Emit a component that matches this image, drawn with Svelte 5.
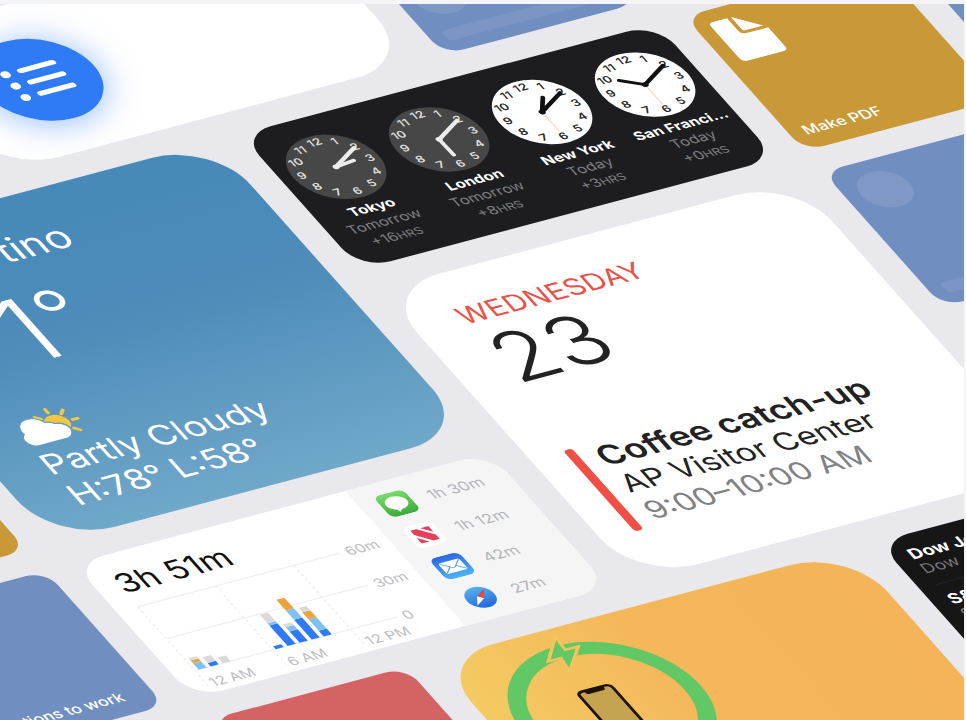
<script>
  const numerals = Array.from({ length: 12 }, (_, i) => {
    const angle = ((i + 1) * Math.PI) / 6;
    return { n: i + 1, x: 43 + 34 * Math.sin(angle), y: 43 - 34 * Math.cos(angle) };
  });

  const cities = [
    { name: 'Tokyo', day: 'Tomorrow', offset: '+16', night: true, hour: 84, hourLength: 19 },
    { name: 'London', day: 'Tomorrow', offset: '+8', night: true, hour: 178, hourLength: 22 },
    { name: 'New York', day: 'Today', offset: '+3', night: false, hour: 34, hourLength: 20 },
    { name: 'San Franci...', day: 'Today', offset: '+0', night: false, hour: 305, hourLength: 22 }
  ];

  const GRAY = '#dadada';
  const ORANGE = '#eba43c';
  const SKY = '#7cc3f4';
  const BLUE = '#2e79f6';

  // Each bar is stacked from the baseline upwards.
  const bars = [
    { x: 27, parts: [[SKY, 9], [ORANGE, 4], [GRAY, 3]] },
    { x: 39, parts: [[BLUE, 5], [GRAY, 8]] },
    { x: 51, parts: [[GRAY, 8]] },
    { x: 104, parts: [[BLUE, 4]] },
    { x: 116, parts: [[BLUE, 29], [SKY, 3], [GRAY, 12]] },
    { x: 128, parts: [[BLUE, 16], [SKY, 6], [GRAY, 4]] },
    { x: 140, parts: [[BLUE, 28], [SKY, 13], [ORANGE, 15]] },
    { x: 152, parts: [[BLUE, 8], [SKY, 16], [ORANGE, 10], [GRAY, 6]] }
  ].map((bar) => {
    let y = 159;
    return {
      x: bar.x,
      parts: bar.parts.map(([color, height]) => {
        y -= height;
        return { color, height, y };
      })
    };
  });

  const usage = [
    { app: 'messages', time: '1h 30m' },
    { app: 'news', time: '1h 12m' },
    { app: 'mail', time: '42m' },
    { app: 'safari', time: '27m' }
  ];

  const bolt = 'M113 15L95 35H106L104 50L123 30H112Z';
</script>

<main class="stage">
  <div class="plane">
    <section class="widget large reminders">
      <div class="badge">
        <svg viewBox="0 0 108 108" width="108" height="108" aria-label="Reminders">
          <g fill="#fff">
            <circle cx="30" cy="38" r="4.5" />
            <circle cx="30" cy="54" r="4.5" />
            <circle cx="30" cy="70" r="4.5" />
          </g>
          <path d="M45 38H77M45 54H77M45 70H77" stroke="#fff" stroke-width="6" stroke-linecap="round" />
        </svg>
      </div>
    </section>

    <div class="widget tile blue low">
      <span class="dot"></span>
      <span class="line"></span>
    </div>

    <section class="widget large weather">
      <h2>Cupertino</h2>
      <p class="temp">71<span>°</span></p>
      <svg class="sky" viewBox="0 0 66 46" width="66" height="46" aria-label="Partly cloudy">
        <circle cx="42" cy="23" r="11.5" fill="#f7c63f" />
        <path
          d="M42 3V8M56 9L52 13M28 9L32 13M57 23H62M52 33L56 37"
          stroke="#f7c63f"
          stroke-width="3.4"
          stroke-linecap="round"
        />
        <path
          d="M11 42A9 9 0 0 1 8 25A12.500 12.500 0 0 1 32 18A10 10 0 0 1 40 22.500A9.500 9.500 0 0 1 39 42Z"
          fill="#fff"
          stroke="#669cc4"
          stroke-width="2"
        />
        <path
          d="M11 42A9 9 0 0 1 8 25.500A12 12 0 0 1 32 18.500A9.500 9.500 0 0 1 39 23A9.200 9.200 0 0 1 38 42Z"
          fill="#fff"
        />
      </svg>
      <p>Partly Cloudy</p>
      <p>H:78° L:58°</p>
    </section>

    <section class="widget clocks">
      {#each cities as city}
        <div class="city" class:night={city.night}>
          <svg viewBox="0 0 86 86" width="86" height="86">
            <circle class="face" cx="43" cy="43" r="42.500" />
            {#each numerals as mark}
              <text x={mark.x} y={mark.y + 4}>{mark.n}</text>
            {/each}
            <path class="second" d="M43 43V70" />
            <g transform="rotate({city.hour} 43 43)">
              <path class="hand" d="M43 43V{43 - city.hourLength}" />
            </g>
            <g transform="rotate(60 43 43)">
              <path class="hand" d="M43 43V10" />
            </g>
            <circle class="hub" cx="43" cy="43" r="3" />
          </svg>
          <strong>{city.name}</strong>
          <span>{city.day}</span>
          <span>{city.offset}<small>HRS</small></span>
        </div>
      {/each}
    </section>

    <button class="widget tile gold">
      <svg viewBox="0 0 46 55" width="46" height="55" aria-hidden="true">
        <path
          fill="#fff"
          d="M5 0H19V17Q19 23 25 23H46V49Q46 55 40 55H6Q0 55 0 49V5Q0 0 5 0ZM23 0L43 19.500H25Q23 19.500 23 17.500Z"
        />
      </svg>
      <span>Make PDF</span>
    </button>

    <div class="widget tile blue far"></div>

    <div class="widget tile gold west"></div>

    <section class="widget large calendar">
      <h2>WEDNESDAY</h2>
      <p class="date">23</p>
      <div class="event">
        <strong>Coffee catch-up</strong>
        <span>AP Visitor Center</span>
        <time>9:00–10:00 AM</time>
      </div>
    </section>

    <div class="widget tile blue high">
      <span class="dot"></span>
      <span class="line"></span>
    </div>

    <button class="widget tile blue work"><span>Directions to work</span></button>

    <section class="widget screentime">
      <div class="graph">
        <h2>3h 51m</h2>
        <svg viewBox="2 56 272 134" width="272" height="134">
          <g stroke="#efeff1" stroke-width="1.500" fill="none">
            <path d="M23 69H225M23 114H225M23 159H225" />
            <path d="M23 69V182M101 69V182M179 69V182" stroke-dasharray="3 3" />
          </g>
          {#each bars as bar}
            {#each bar.parts as part}
              <rect x={bar.x} y={part.y} width="8" height={part.height} fill={part.color} />
            {/each}
          {/each}
          <text x="231" y="75">60m</text>
          <text x="231" y="120">30m</text>
          <text x="231" y="165">0</text>
          <text x="27" y="183">12 AM</text>
          <text x="105" y="183">6 AM</text>
          <text x="183" y="183">12 PM</text>
        </svg>
      </div>
      <ul>
        {#each usage as item}
          <li>
            <svg viewBox="0 0 30 30" width="30" height="30" aria-label={item.app}>
              {#if item.app === 'messages'}
                <rect width="30" height="30" rx="7" fill="url(#green)" />
                <path
                  d="M15 5.500C21 5.500 25.500 9.300 25.500 14S21 22.500 15 22.500L12 25.500L10.500 21.700C7 20.300 4.500 17.500 4.500 14C4.500 9.300 9 5.500 15 5.500Z"
                  fill="#fff"
                />
              {:else if item.app === 'news'}
                <rect width="30" height="30" rx="7" fill="#fff" />
                <path d="M6 6H12L24 18V24H18L6 12ZM16 6H24V14ZM6 16L14 24H6Z" fill="#e63f5c" />
              {:else if item.app === 'mail'}
                <rect width="30" height="30" rx="7" fill="url(#deep)" />
                <rect x="4.500" y="8" width="21" height="14.500" rx="2" fill="#fff" />
                <path
                  d="M5.500 9L13.500 16.300Q15 17.500 16.500 16.300L24.500 9M5.500 21.500L12 15.200M24.500 21.500L18 15.200"
                  fill="none"
                  stroke="#4a9ef0"
                  stroke-width="1"
                />
              {:else}
                <circle cx="15" cy="15" r="13.800" fill="url(#sea)" />
                <path d="M23.500 6.500L17.200 17.200L12.800 12.800Z" fill="#e8453c" />
                <path d="M6.500 23.500L17.200 17.200L12.800 12.800Z" fill="#fff" />
              {/if}
            </svg>
            <span>{item.time}</span>
          </li>
        {/each}
      </ul>
      <svg class="defs" width="0" height="0" aria-hidden="true">
        <linearGradient id="green" x2="0" y2="1">
          <stop offset="0" stop-color="#78dc6c" />
          <stop offset="1" stop-color="#3daa38" />
        </linearGradient>
        <linearGradient id="deep" x2="0" y2="1">
          <stop offset="0" stop-color="#2c68e0" />
          <stop offset="1" stop-color="#4fb4f5" />
        </linearGradient>
        <linearGradient id="sea" x2="0" y2="1">
          <stop offset="0" stop-color="#55b2ee" />
          <stop offset="1" stop-color="#2467dc" />
        </linearGradient>
      </svg>
    </section>

    <div class="widget tile red"></div>

    <section class="widget large battery">
      <svg viewBox="0 0 416 409" width="416" height="409" aria-label="Battery">
        <circle cx="109" cy="110" r="80.500" fill="none" stroke="#62c765" stroke-width="16" />
        <path d={bolt} fill="#f3c35c" stroke="#f3c35c" stroke-width="6" />
        <path d={bolt} fill="#62c765" />
        <rect x="92" y="81" width="33" height="66" rx="5" fill="#c6a350" stroke="#1c1206" stroke-width="3" />
        <path d="M99 81H118V83Q118 86 115 86H102Q99 86 99 83Z" fill="#1c1206" />
      </svg>
    </section>

    <section class="widget large stocks">
      <div class="stock"><strong>Dow Jones</strong><span>Dow Jones Industrial</span></div>
      <div class="stock"><strong>S&amp;P 500</strong><span>Standard &amp; Poor's</span></div>
    </section>
  </div>
</main>

<style>
  :global(body) {
    margin: 0;
    background: #f5f5f7;
  }

  .stage {
    box-sizing: border-box;
    height: 100vh;
    margin-right: 2px;
    border-top: 4px solid #f5f5f7;
    background: #e8e8ed;
    overflow: hidden;
    font-family: Inter, 'Liberation Sans', sans-serif;
  }

  h2,
  p,
  ul {
    margin: 0;
    padding: 0;
    font-weight: 400;
  }

  .plane {
    display: grid;
    width: max-content;
    grid-template-columns: repeat(7, 194px);
    grid-template-rows: repeat(6, 190px);
    gap: 29px 28px;
    transform-origin: 0 0;
    transform: matrix(1, -0.266, 0.632, 0.71, -564, 152);
  }

  .widget {
    box-sizing: border-box;
    min-width: 0;
    border: 0;
    border-radius: 30px;
    overflow: hidden;
    font-family: inherit;
  }

  .large {
    border-radius: 60px;
  }

  .reminders {
    grid-area: 1 / 3 / 2 / 5;
    padding: 42px 45px;
    background: #fff;
  }

  .badge {
    width: 108px;
    height: 108px;
    border-radius: 50%;
    background: #2f7bf6;
    box-shadow: 0 4px 32px rgba(47, 123, 246, 0.5);
  }

  .tile {
    display: flex;
    flex-direction: column;
    justify-content: space-between;
    align-items: flex-start;
    padding: 15px 14px 14px;
    border-radius: 20px;
    color: #fff;
    font-size: 16px;
    font-weight: 500;
    line-height: 20px;
    text-align: left;
    white-space: nowrap;
  }

  .blue {
    background: #708ec0;
  }

  .gold {
    background: #c99938;
  }

  .red {
    grid-area: 5 / 2;
    background: #d56364;
  }

  .low {
    grid-area: 1 / 5;
    justify-content: flex-end;
    gap: 17px;
  }

  .far {
    grid-area: 2 / 7;
  }

  .high {
    grid-area: 3 / 6;
  }

  .west {
    grid-area: 3 / 1;
  }

  .work {
    grid-area: 4 / 1;
    justify-content: flex-end;
  }

  .work span {
    align-self: center;
  }

  .dot {
    width: 48px;
    height: 48px;
    border-radius: 50%;
    background: rgba(255, 255, 255, 0.1);
  }

  .line {
    width: 100%;
    height: 14px;
    border-radius: 4px;
    background: rgba(255, 255, 255, 0.08);
  }

  button.gold {
    grid-area: 2 / 6;
  }

  .weather {
    grid-area: 2 / 2 / 4 / 4;
    padding: 40px 46px;
    background: linear-gradient(#4789b9 10%, #4f8dba 45%, #70a8c9);
    color: #fff;
    font-size: 35px;
    line-height: 43px;
  }

  .weather h2 {
    font-size: 40px;
    line-height: 44px;
  }

  .temp {
    margin-top: 19px;
    font-size: 110px;
    font-weight: 300;
    line-height: 110px;
  }

  .temp span {
    font-size: 84px;
    line-height: 0;
    vertical-align: 18px;
  }

  .sky {
    display: block;
    margin-top: 38px;
  }

  .clocks {
    grid-area: 2 / 4 / 3 / 6;
    display: flex;
    padding: 23px 2px 0;
    background: #1d1d1f;
  }

  .city {
    flex: 1;
    display: flex;
    flex-direction: column;
    align-items: center;
    min-width: 0;
    color: #7f7f82;
    font-size: 15px;
    line-height: 20px;
    white-space: nowrap;
  }

  .city strong {
    margin-top: 4px;
    color: #fff;
    font-weight: 700;
  }

  .city small {
    font-size: 12px;
  }

  .city text {
    fill: #2a2a2a;
    font-size: 12px;
    font-weight: 600;
    text-anchor: middle;
  }

  .face {
    fill: #fff;
  }

  .hand {
    stroke: #111;
    stroke-width: 4;
    stroke-linecap: round;
  }

  .hub {
    fill: #111;
  }

  .second {
    stroke: #f6cdb4;
    stroke-width: 1;
  }

  .night .face {
    fill: #474747;
  }

  .night text {
    fill: #dcdcdc;
  }

  .night .hand {
    stroke: #ececec;
  }

  .night .hub {
    fill: #ececec;
  }

  .night .second {
    stroke: none;
  }

  .calendar {
    grid-area: 3 / 4 / 5 / 6;
    display: flex;
    flex-direction: column;
    padding: 38px 33px 56px;
    background: #fff;
    color: #222;
  }

  .calendar h2 {
    padding-left: 12px;
    color: #ea5148;
    font-size: 29px;
    line-height: 36px;
  }

  .date {
    padding-left: 12px;
    font-size: 86px;
    font-weight: 300;
    line-height: 88px;
  }

  .event {
    display: grid;
    position: relative;
    margin-top: auto;
    padding-left: 24px;
    font-size: 31px;
    line-height: 38px;
    white-space: nowrap;
  }

  .event::before {
    content: '';
    position: absolute;
    inset: 0 auto 0 0;
    width: 9px;
    border-radius: 4px;
    background: #ef4f45;
  }

  .event strong {
    font-size: 34px;
    font-weight: 600;
  }

  .event time {
    color: #828284;
  }

  .screentime {
    grid-area: 4 / 2 / 5 / 4;
    display: flex;
    background: #fff;
  }

  .graph {
    width: 272px;
  }

  .graph h2 {
    padding: 20px 0 0 20px;
    color: #111;
    font-size: 33px;
    line-height: 36px;
  }

  .graph svg {
    display: block;
  }

  .graph text {
    fill: #bdbdc0;
    font-size: 15px;
  }

  .screentime ul {
    flex: 1;
    display: flex;
    flex-direction: column;
    gap: 14px;
    padding: 15px 0 0 18px;
    background: #f5f5f6;
    list-style: none;
  }

  .screentime li {
    display: flex;
    align-items: center;
    gap: 16px;
    color: #b4b4b7;
    font-size: 16px;
    line-height: 30px;
  }

  .defs {
    position: absolute;
  }

  .battery {
    grid-area: 5 / 3 / 7 / 5;
    background: linear-gradient(90deg, #f4ca62, #f4b75a 45%, #f4b457);
  }

  .stocks {
    grid-area: 5 / 5 / 7 / 7;
    padding: 14px 16px;
    border-radius: 30px;
    background: #161617;
    color: #fff;
  }

  .stock {
    display: grid;
    padding-bottom: 10px;
    margin-bottom: 10px;
    border-bottom: 1px solid #252527;
    font-size: 18px;
    line-height: 21px;
  }

  .stock span {
    color: #77777a;
    font-size: 17px;
  }
</style>
